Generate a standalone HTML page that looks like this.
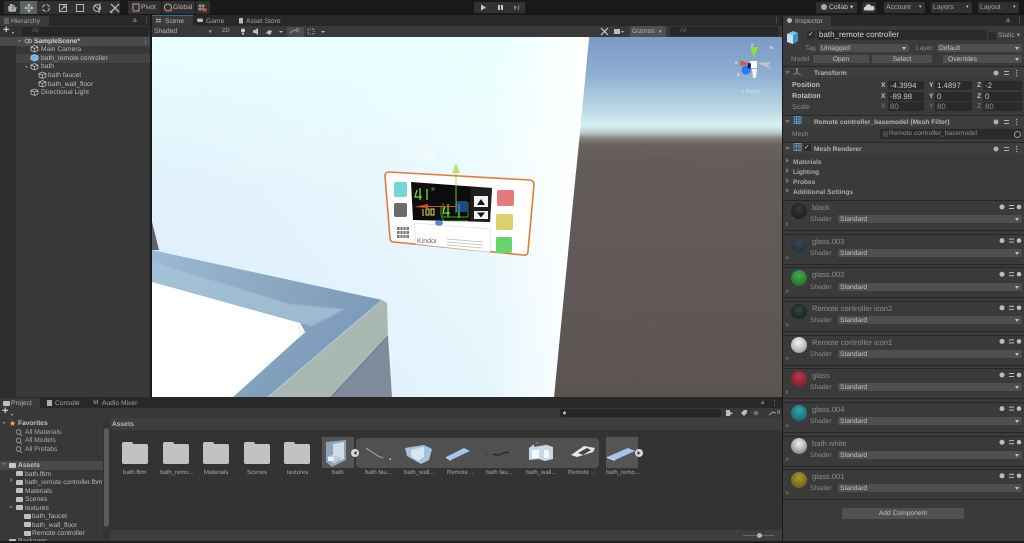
<!DOCTYPE html>
<html><head><meta charset="utf-8">
<style>
html,body{margin:0;padding:0;width:1024px;height:543px;overflow:hidden;background:#191919}
#w{position:absolute;left:0;top:0;width:1024px;height:543px;overflow:hidden;filter:blur(.35px)}
body{font-family:"Liberation Sans",sans-serif;font-size:6.700px;color:#c4c4c4;text-rendering:geometricPrecision}
.a,.t{position:absolute}
.t{white-space:nowrap;line-height:9px}
.b{font-weight:bold}
.d{color:#8a8a8a}
.m{font-size:7.600px;color:#8c8c8c}
.f{position:absolute;background:#2a2a2a;height:9px;border-radius:1px;color:#c4c4c4;line-height:9px;padding-left:2px;box-sizing:border-box;font-size:7.800px}
.dd{position:absolute;background:#4f4f4f;height:8px;border-radius:1px;line-height:9px;padding-left:2px;box-sizing:border-box;color:#c4c4c4}
.dd:after{content:"";position:absolute;right:3px;top:3px;border:2px solid transparent;border-top:3px solid #c4c4c4;border-bottom:0}
.tb{position:absolute;top:1px;height:13px;background:#303030;border-radius:1px}
.ball{position:absolute;left:791px;width:16px;height:16px;border-radius:50%}
.card{position:absolute;left:783px;width:241px;height:31px;background:#3a3a3a;border-top:1px solid #262626;border-bottom:1px solid #262626;box-sizing:border-box}
.lab{position:absolute;top:470px;font-size:6px;color:#a8a8a8;white-space:nowrap;text-align:center}
.fold{position:absolute;top:444px;width:26px;height:20px;background:#c2c2c2;border-radius:2px}
.fold:before{content:"";position:absolute;left:0;top:-2px;width:11px;height:5px;background:#c2c2c2;border-radius:2px 2px 0 0}
.sf{position:absolute;width:7px;height:5px;background:#c0c0c0;border-radius:1px}
</style></head><body><div id="w">

<!-- top toolbar -->
<div class="a" style="left:0;top:0;width:1024px;height:15px;background:#191919"></div>
<div class="tb" style="left:4px;width:116px"></div>
<div class="a" style="left:20px;top:1px;width:17px;height:13px;background:#5a5f62"></div>
<svg class="a" style="left:0;top:0" width="210" height="15" fill="none" stroke="#b8b8b8" stroke-width="1">
<path d="M9 11V6M10.500 11V4M12 11V4M14 11V5M9 11h6l1-4" stroke-width="1.400"/>
<path d="M29 5V11M26 8h6M29 4l-1 1.500h2zM29 12l-1-1.500h2zM25 8l1.500-1v2zM33 8l-1.500-1v2z"/>
<circle cx="46" cy="8" r="3.400" stroke-dasharray="4 1.500"/>
<rect x="59.500" y="4.500" width="7" height="7"/><path d="M61 10l4-4M63 6h2v2"/>
<rect x="76.500" y="4.500" width="7" height="7"/>
<circle cx="97" cy="8" r="3.500"/><path d="M100 3l-1 10M94 5l6 5"/>
<path d="M111 4l8 8M119 4l-8 8M110 11l2 2" stroke-width="1.300"/>
</svg>
<div class="tb" style="left:128px;width:33px"></div>
<div class="tb" style="left:162px;width:33px"></div>
<div class="tb" style="left:196px;width:14px"></div>
<svg class="a" style="left:0;top:0" width="210" height="15" fill="none" stroke="#aaa" stroke-width="1">
<rect x="133" y="4" width="6" height="7"/><circle cx="134" cy="11" r="1.500" fill="#c24a2e" stroke="none"/>
<circle cx="168" cy="7.500" r="3.500"/><circle cx="171" cy="10" r="1.500" fill="#c24a2e" stroke="none"/>
<path d="M200 4v7M203 4v7M198 6h7M198 9h7"/><circle cx="205" cy="10" r="2" fill="#c24a2e" stroke="none"/>
</svg>
<div class="t" style="left:141px;top:3px;color:#b8b8b8">Pivot</div>
<div class="t" style="left:173px;top:3px;color:#b8b8b8">Global</div>

<div class="tb" style="left:474px;top:2px;width:51px;height:11px;background:#323232"></div>
<svg class="a" style="left:474px;top:2px" width="51" height="11"><path d="M7 2.500l5 3-5 3z" fill="#c8c8c8"/><rect x="24" y="3" width="2" height="5" fill="#c8c8c8"/><rect x="27" y="3" width="2" height="5" fill="#c8c8c8"/><path d="M40 3l3.500 2.500L40 8z" fill="#777"/><rect x="44" y="3" width="1.200" height="5" fill="#777"/></svg>

<div class="tb" style="left:816px;top:2px;width:41px;height:11px"></div>
<div class="tb" style="left:862px;top:2px;width:14px;height:11px"></div>
<div class="tb" style="left:884px;top:2px;width:41px;height:11px"></div>
<div class="tb" style="left:931px;top:2px;width:41px;height:11px"></div>
<div class="tb" style="left:978px;top:2px;width:41px;height:11px"></div>
<div class="t" style="left:829px;top:3px">Collab ▾</div>
<div class="a" style="left:821px;top:4px;width:6px;height:6px;background:#aaa;border-radius:50%"></div>
<svg class="a" style="left:862px;top:2px" width="14" height="11"><path d="M3 8.500a2 2 0 0 1 .5-3.800 3 3 0 0 1 5.700-.7 2.300 2.300 0 0 1 1.800 4.500z" fill="#d0d0d0"/></svg>
<div class="t" style="left:886px;top:3px;color:#a8a8a8;font-size:6.900px">Account</div><div class="t" style="left:919px;top:3px;font-size:5px">▾</div>
<div class="t" style="left:933px;top:3px;color:#a8a8a8;font-size:6.900px">Layers</div><div class="t" style="left:966px;top:3px;font-size:5px">▾</div>
<div class="t" style="left:980px;top:3px;color:#a8a8a8;font-size:6.900px">Layout</div><div class="t" style="left:1013px;top:3px;font-size:5px">▾</div>

<!-- hierarchy -->
<div class="a" style="left:0;top:15px;width:150px;height:383px;background:#383838"></div>
<div class="a" style="left:0;top:15px;width:150px;height:11px;background:#282828"></div>
<div class="a" style="left:0;top:16px;width:49px;height:10px;background:#3a3a3a"></div>
<div class="t d" style="left:11px;top:17px;color:#a4a4a4;font-size:6.800px">Hierarchy</div>
<svg class="a" style="left:3px;top:17px" width="7" height="8" stroke="#888"><path d="M1 2h5M1 4h5M1 6h5"/></svg>
<div class="t" style="left:133px;top:16px;color:#aaa">a</div><div class="t" style="left:143px;top:16px;color:#aaa">⋮</div>
<div class="a" style="left:0;top:26px;width:150px;height:11px;background:#333"></div>
<div class="a" style="left:22px;top:27px;width:127px;height:9px;background:#262626;border-radius:2px"></div>
<div class="t" style="left:3px;top:26px;font-size:11px;font-weight:bold;color:#ccc">+</div><div class="t" style="left:12px;top:28px;font-size:4px">▾</div>
<div class="t" style="left:32px;top:27px;color:#666;font-size:6px">All</div>
<div class="a" style="left:0;top:37px;width:16px;height:361px;background:#2d2d2d"></div>
<div class="a" style="left:0;top:37px;width:150px;height:9px;background:#4a4a4a"></div>
<div class="a" style="left:16px;top:54px;width:134px;height:9px;background:#444"></div>
<div class="t b" style="left:34px;top:36.500px;color:#d0d0d0">SampleScene*</div>
<div class="t" style="left:41px;top:45px;color:#b8b8b8">Main Camera</div>
<div class="t" style="left:41px;top:53.500px;color:#b8b8b8">bath_remote controller</div>
<div class="t" style="left:41px;top:62px;color:#b8b8b8">bath</div>
<div class="t" style="left:48px;top:71px;color:#b8b8b8">bath faucet</div>
<div class="t" style="left:48px;top:79.500px;color:#b8b8b8">bath_wall_floor</div>
<div class="t" style="left:41px;top:88px;color:#b8b8b8">Directional Light</div>
<div class="t" style="left:142px;top:37px;color:#bbb">⋮</div>
<svg class="a" style="left:0;top:37px" width="60" height="60" fill="none" stroke="#bdbdbd" stroke-width=".8">
<path d="M18 3h3l-1.500 2z" fill="#888" stroke="none"/><path d="M25 29h3l-1.500 2z" fill="#888" stroke="none"/>
<circle cx="27" cy="4" r="2"/><circle cx="30" cy="4" r="1.500"/>
<path d="M31 10l3.500-1.500L38 10v3.500L34.500 15 31 13.500zM31 10l3.500 1.500L38 10M34.500 11.500V15"/>
<path d="M31 28l3.500-1.500L38 28v3.500L34.500 33 31 31.500zM31 28l3.500 1.500L38 28M34.500 29.500V33"/>
<path d="M39 36.500l3.500-1.500L46 36.500V40l-3.500 1.500L39 40zM39 36.500l3.500 1.500 3.500-1.500M42.500 38v3.500"/>
<path d="M39 45l3.500-1.500L46 45v3.500L42.500 50 39 48.500zM39 45l3.500 1.500L46 45M42.500 46.500V50"/>
<path d="M31 53.500l3.500-1.500L38 53.500V57l-3.500 1.500L31 57zM31 53.500l3.500 1.500 3.500-1.500M34.500 55v3.500"/>
<path d="M31 19l3.500-1.500L38 19v3.500L34.500 24 31 22.500z" fill="#6db4e0" stroke="#9fd4ee"/>
</svg>

<!-- scene tabs -->
<div class="a" style="left:152px;top:15px;width:630px;height:11px;background:#282828"></div>
<div class="a" style="left:152px;top:15px;width:41px;height:11px;background:#3a3a3a;border-top:1px solid #3a6a96;box-sizing:border-box"></div>
<div class="t" style="left:165px;top:17px;color:#b8b8b8">Scene</div>
<div class="t" style="left:206px;top:17px;color:#a4a4a4">Game</div>
<div class="t" style="left:246px;top:17px;color:#a4a4a4">Asset Store</div>
<svg class="a" style="left:152px;top:15px" width="100" height="11" fill="none" stroke="#aaa"><path d="M5 3v5M8 3v5M4 4.500h5M4 6.500h5" stroke-width=".7"/><rect x="45" y="3.500" width="6" height="3.500" rx="1.500" fill="#bbb" stroke="none"/><rect x="87" y="3" width="4" height="5.500" fill="#bbb" stroke="none"/></svg>
<div class="t" style="left:773px;top:16px;color:#aaa">⋮</div>
<div class="a" style="left:152px;top:26px;width:630px;height:11px;background:#383838"></div>
<div class="t" style="left:154px;top:27px;color:#b8b8b8">Shaded</div>
<div class="t" style="left:209px;top:28px;font-size:5px">▾</div>
<div class="t" style="left:222px;top:27px;font-size:6px;color:#aaa">2D</div>
<svg class="a" style="left:236px;top:26px" width="100" height="11"><circle cx="7" cy="4.500" r="2" fill="#ccc"/><rect x="6" y="7" width="2" height="1.500" fill="#ccc"/><path d="M17 4h2l3-2v7l-3-2h-2z" fill="#bbb"/><path d="M30 7l3-3 3 1-2 4z" fill="#bbb"/><path d="M43 5h4l-2 2z" fill="#bbb"/><rect x="51" y="1" width="17" height="10" fill="#4c4c4c"/><path d="M54 7l4-3 3 1" stroke="#999" fill="none"/><rect x="72" y="3" width="6" height="5" fill="none" stroke="#aaa" stroke-dasharray="1 1"/><path d="M85 5h4l-2 2z" fill="#bbb"/></svg>
<div class="t" style="left:296px;top:27px;font-size:6px;color:#aaa">0</div>
<svg class="a" style="left:599px;top:26px" width="30" height="11"><path d="M2 2l7 7M9 2l-7 7" stroke="#ccc" stroke-width="1.200"/><rect x="15" y="3" width="6" height="5" fill="#bbb"/><path d="M22 5h3l-1.500 2z" fill="#bbb"/></svg>
<div class="a" style="left:630px;top:26px;width:36px;height:11px;background:#505050"></div>
<div class="t" style="left:632px;top:27px;color:#b0b0b0">Gizmos</div>
<div class="t" style="left:659px;top:28px;font-size:5px">▾</div>
<div class="a" style="left:670px;top:27px;width:109px;height:9px;background:#272727;border-radius:2px"></div>
<div class="t" style="left:680px;top:27px;font-size:6px;color:#666">All</div>

<!-- scene -->
<svg class="a" style="left:152px;top:37px" width="630" height="360" viewBox="152 37 630 360">
<defs>
<linearGradient id="sky" x1="0" y1="37" x2="0" y2="160" gradientUnits="userSpaceOnUse">
<stop offset="0" stop-color="#7b9ac6"/><stop offset=".3" stop-color="#8eaed2"/><stop offset=".6" stop-color="#bcdae6"/><stop offset=".72" stop-color="#d8f0f2"/><stop offset=".78" stop-color="#b8c8c8"/><stop offset=".82" stop-color="#8a8684"/><stop offset=".87" stop-color="#6a6361"/><stop offset="1" stop-color="#625c5a"/>
</linearGradient>
<linearGradient id="gr" x1="0" y1="150" x2="0" y2="397" gradientUnits="userSpaceOnUse"><stop offset="0" stop-color="#645d5b"/><stop offset="1" stop-color="#5b5452"/></linearGradient>
<linearGradient id="wall" x1="585" y1="60" x2="170" y2="390" gradientUnits="userSpaceOnUse"><stop offset="0" stop-color="#ffffff"/><stop offset=".1" stop-color="#f6ffff"/><stop offset=".4" stop-color="#e8f7fd"/><stop offset="1" stop-color="#dcedfb"/></linearGradient>
<linearGradient id="wall2" x1="200" y1="37" x2="200" y2="190" gradientUnits="userSpaceOnUse"><stop offset="0" stop-color="#e8ffff"/><stop offset="1" stop-color="#e8ffff" stop-opacity="0"/></linearGradient>
<linearGradient id="wall3" x1="490" y1="0" x2="585" y2="0" gradientUnits="userSpaceOnUse"><stop offset="0" stop-color="#fff" stop-opacity="0"/><stop offset="1" stop-color="#fff"/></linearGradient>
<linearGradient id="rim" x1="152" y1="250" x2="320" y2="390" gradientUnits="userSpaceOnUse"><stop offset="0" stop-color="#9cbad4"/><stop offset=".5" stop-color="#8ca8c2"/><stop offset="1" stop-color="#7a9aba"/></linearGradient>
<filter id="bl"><feGaussianBlur stdDeviation=".8"/></filter>
</defs>
<rect x="152" y="37" width="630" height="120" fill="url(#sky)"/>
<rect x="152" y="157" width="630" height="240" fill="url(#gr)"/>
<g stroke="#6e6765" stroke-width=".4" opacity=".6"><path d="M570 190L782 205M570 240L782 275M565 300L782 365M640 150L782 175"/></g>
<path d="M152 37H589L554 397H152z" fill="url(#wall)"/>
<path d="M152 37H589L575 190H152z" fill="url(#wall2)"/>
<path d="M480 37H589L554 397H480z" fill="url(#wall3)"/>
<path d="M152 222l7 28h-7z" fill="#5d636c"/>
<path d="M152 250L382 300L268 397H233L305 332L300 323L152 282z" fill="url(#rim)"/>
<path d="M152 262L290 304L345 309L312 326L300 323L152 282z" fill="#a8c6da" opacity=".7" filter="url(#bl)"/>
<path d="M152 282L300 323L305 332L233 397H152z" fill="#ffffff"/>
<path d="M298 324l7 8-7 6z" fill="#eef8e8" filter="url(#bl)"/>
<path d="M382 300L387 303L388 336L331 397H268z" fill="#a9b8b2"/>
<path d="M382 300L268 397" stroke="#b8ccd0" stroke-width="1"/>
<path d="M388 336L392 397H331z" fill="#7f8a9b"/>
<path d="M388 336L331 397" stroke="#666e78" stroke-width=".7"/>
<!-- cloud gizmo -->
<path d="M419 162c-5 0-6-5-2-6 0-5 3-9 8-9 3 0 5 2 6 5 3-1 8 1 8 5 0 3-2 5-5 5z" fill="#f0f9fc" stroke="#e6f0f4" stroke-width=".7"/>
<!-- device -->
<path d="M389 172L529 180Q534 180 534 185L528 251Q528 256 523 255L394 242Q390 242 390 238L385 176Q385 172 389 172z" fill="#ffffff" stroke="#e67a33" stroke-width="1.600"/>
<path d="M411 182L492 188L490 222L413 220z" fill="#0c0c0c"/>
<path d="M471 187L492 188L490 222L470 221z" fill="#1e1e1e"/>
<path d="M474 196h14v11h-14zM474 211h14v8h-14z" fill="#f2f2f2"/>
<path d="M477 205l4-6 4 6zM477 212.500l4 5 4-5z" fill="#111"/>
<rect x="394" y="182" width="13" height="15" rx="2" fill="#74d6d6"/>
<rect x="394" y="203" width="13" height="14" rx="2" fill="#6c6c6c"/>
<rect x="497" y="190" width="17" height="16" rx="2" fill="#e47a7c"/>
<rect x="496" y="214" width="17" height="16" rx="2" fill="#dccf70"/>
<rect x="496" y="237" width="16" height="16" rx="2" fill="#68d66c"/>
<path d="M414 223L491 229L490 252L416 244z" fill="#fff" stroke="#d4d4d4" stroke-width=".5"/>
<g fill="#777"><rect x="397" y="227" width="12" height="3"/><rect x="397" y="231" width="12" height="3"/><rect x="397" y="235" width="12" height="3"/></g>
<g stroke="#fff" stroke-width=".8"><path d="M400 226v13M403 226v13M406 226v13"/></g>
<text x="417" y="243" font-family="Liberation Sans,sans-serif" font-size="7" fill="#666">Kindoi</text>
<path d="M447 239l36 3M447 242l36 3M447 245l36 3" stroke="#bbb" stroke-width=".8"/>
<!-- display -->
<g fill="none" stroke="#72e03c" stroke-width="1.300"><path d="M417 190l-2 7h7M420 188v12"/><path d="M427 189v11"/><path d="M445 206l-2 7h7M448 204v13"/><path d="M459 204v14"/></g>
<path d="M432 188h2v2h-2z" fill="none" stroke="#72e03c" stroke-width=".6"/>
<g fill="none" stroke="#d8e060" stroke-width="1"><path d="M423 209v7M426 209h3v6h-3zM431 209h3v6h-3z"/></g>
<path d="M443 203v14h25V202M441 207v9l3 5H468" fill="none" stroke="#56c83c" stroke-width=".7"/>
<rect x="456" y="201" width="11" height="11" fill="#2b68c8" opacity=".65"/>
<path d="M456 163l-4 10h8z" fill="#bce06a"/>
<path d="M456 173v40" stroke="#7adf3a" stroke-width=".8"/>
<path d="M428 208l-14-1 14-3v2h28v1h-28z" fill="#e04a28"/>
<ellipse cx="439" cy="223" rx="4" ry="2.800" fill="#5a88d8"/>
<!-- scene gizmo -->
<path d="M754 58l-4-11h8z" fill="#8fe03c"/>
<path d="M749 64l-9-4 .5 6z" fill="#e8503a"/>
<path d="M757 63l14-1-3 3 3 4z" fill="#c4c4c4"/>
<path d="M752 69l1 9h3l1-9z" fill="#f0f0f0"/>
<rect x="750" y="61" width="7" height="7" fill="#fff"/>
<circle cx="746" cy="70" r="4.600" fill="#2f78ea"/>
<path d="M748 63l3 .5-.5 6-3-2z" fill="#0a1a6a"/>
<text x="751" y="46" font-size="5" fill="#fff" font-family="Liberation Sans,sans-serif">y</text>
<text x="735" y="64" font-size="5" fill="#fff" font-family="Liberation Sans,sans-serif">x</text>
<text x="737" y="76" font-size="5" fill="#fff" font-family="Liberation Sans,sans-serif">z</text>
<text x="741" y="93" font-size="5.500" fill="#d4e4f0" font-family="Liberation Sans,sans-serif">&lt; Persp</text>
<rect x="770" y="46" width="3" height="3" fill="#bcc8d8"/>
</svg>

<!-- project -->
<div class="a" style="left:0;top:397px;width:782px;height:146px;background:#333"></div>
<div class="a" style="left:0;top:397px;width:782px;height:11px;background:#282828"></div>
<div class="a" style="left:0;top:398px;width:40px;height:10px;background:#3a3a3a"></div>
<div class="t" style="left:11px;top:399px;color:#b0b0b0">Project</div>
<div class="t" style="left:55px;top:399px;color:#a0a0a0">Console</div>
<div class="t" style="left:102px;top:399px;color:#a0a0a0">Audio Mixer</div>
<div class="sf" style="left:3px;top:401px"></div>
<div class="a" style="left:47px;top:400px;width:5px;height:6px;background:#aaa"></div>
<div class="t" style="left:93px;top:399px;color:#aaa;font-weight:bold;font-size:6px">!ı!</div>
<div class="t" style="left:761px;top:399px;color:#aaa;font-size:6px">a</div><div class="t" style="left:771px;top:399px;color:#aaa">⋮</div>
<div class="a" style="left:0;top:408px;width:782px;height:10px;background:#383838"></div>
<div class="t" style="left:2px;top:407px;font-size:11px;font-weight:bold;color:#ccc">+</div><div class="t" style="left:11px;top:410px;font-size:4px">▾</div>
<div class="a" style="left:560px;top:409px;width:161px;height:8px;background:#252525;border-radius:2px"></div>
<svg class="a" style="left:560px;top:408px" width="222" height="10" fill="#bbb"><circle cx="4.500" cy="5" r="1.500"/><rect x="166" y="2" width="4" height="6"/><path d="M170 4l3 1-3 2z"/><path d="M181 5l3-3h3v3l-3 3z"/><path d="M196 2l1 2h2l-1.500 1.500.5 2-2-1-2 1 .5-2L193 4h2z" fill="#777"/><path d="M209 7l4-3 3 1" stroke="#aaa" fill="none"/></svg>
<div class="t" style="left:777px;top:409px;font-size:6px;color:#aaa">9</div>

<div class="a" style="left:0;top:418px;width:104px;height:125px;background:#383838"></div>
<div class="a" style="left:0;top:461px;width:103px;height:9px;background:#4a4a4a"></div>

<div class="t" style="left:9px;top:419px;color:#f2b632;font-size:8px">★</div>
<div class="t b" style="left:18px;top:419px;color:#c4c4c4">Favorites</div>
<div class="t" style="left:25px;top:428px;color:#a8a8a8">All Materials</div>
<div class="t" style="left:25px;top:436px;color:#a8a8a8">All Models</div>
<div class="t" style="left:25px;top:445px;color:#a8a8a8">All Prefabs</div>
<svg class="a" style="left:0;top:418px" width="50" height="125" fill="none" stroke="#aaa" stroke-width=".8"><circle cx="18.500" cy="14" r="2.300"/><path d="M20 16l2 2"/><circle cx="18.500" cy="22.500" r="2.300"/><path d="M20 24.500l2 2"/><circle cx="18.500" cy="31" r="2.300"/><path d="M20 33l2 2"/><path d="M2 4h4l-2 2.500zM2 45h4l-2 2.500zM9 88h4l-2 2.500z" fill="#777" stroke="none"/><path d="M10 60l3 2-3 2z" fill="#777" stroke="none"/></svg>
<div class="sf" style="left:9px;top:463px;background:#c8c8c8"></div>
<div class="t b" style="left:18px;top:461px;color:#c4c4c4">Assets</div>
<div class="sf" style="left:16px;top:471px"></div><div class="t" style="left:25px;top:470px;color:#b8b8b8">bath.fbm</div>
<div class="sf" style="left:16px;top:480px"></div><div class="t" style="left:25px;top:478px;color:#b8b8b8;font-size:6.500px">bath_remote controller.fbm</div>
<div class="sf" style="left:16px;top:488px"></div><div class="t" style="left:25px;top:487px;color:#b8b8b8">Materials</div>
<div class="sf" style="left:16px;top:497px"></div><div class="t" style="left:25px;top:495px;color:#b8b8b8">Scenes</div>
<div class="sf" style="left:16px;top:505px"></div><div class="t" style="left:25px;top:504px;color:#b8b8b8">textures</div>
<div class="sf" style="left:24px;top:514px"></div><div class="t" style="left:32px;top:512px;color:#b8b8b8">bath_faucet</div>
<div class="sf" style="left:24px;top:522px"></div><div class="t" style="left:32px;top:521px;color:#b8b8b8">bath_wall_floor</div>
<div class="sf" style="left:24px;top:531px"></div><div class="t" style="left:32px;top:529px;color:#b8b8b8">Remote controller</div>
<div class="sf" style="left:9px;top:539px"></div><div class="t" style="left:18px;top:537px;color:#b8b8b8">Packages</div>
<div class="a" style="left:103px;top:418px;width:7px;height:125px;background:#333"></div>
<div class="a" style="left:104px;top:428px;width:5px;height:99px;background:#5c5c5c;border-radius:3px"></div>
<div class="a" style="left:110px;top:418px;width:672px;height:12px;background:#3e3e3e"></div>
<div class="t b" style="left:112px;top:420px;color:#b8b8b8">Assets</div>
<div class="a" style="left:110px;top:530px;width:672px;height:13px;background:#3e3e3e"></div>
<div class="a" style="left:743px;top:535px;width:31px;height:1px;background:#666"></div>
<div class="a" style="left:757px;top:533px;width:5px;height:5px;border-radius:50%;background:#b4b4b4"></div>
<div class="a" style="left:0;top:541px;width:782px;height:2px;background:#1c1c1c"></div>

<!-- assets grid -->
<div class="fold" style="left:122px"></div><div class="lab" style="left:123px">bath.fbm</div>
<div class="fold" style="left:163px"></div><div class="lab" style="left:160px">bath_remo...</div>
<div class="fold" style="left:203px"></div><div class="lab" style="left:204px">Materials</div>
<div class="fold" style="left:244px"></div><div class="lab" style="left:247px">Scenes</div>
<div class="fold" style="left:284px"></div><div class="lab" style="left:287px">textures</div>

<div class="a" style="left:322px;top:437px;width:32px;height:31px;background:#555"></div>
<div class="a" style="left:356px;top:438px;width:243px;height:30px;background:#505050;border-radius:4px"></div>
<div class="a" style="left:606px;top:437px;width:32px;height:31px;background:#555"></div>
<svg class="a" style="left:320px;top:430px" width="330" height="45">
<path d="M6 12l20-2v20l-14 7-6-5z" fill="#8ea4bc"/><path d="M13 14l11-2v17l-11 3z" fill="#d0dde9"/><path d="M7 27l5-2 10 3-8 6z" fill="#bcccdc"/><rect x="8" y="27" width="6" height="4" fill="#eef4fa"/>
<circle cx="35" cy="23" r="4" fill="#d8d8d8"/><path d="M36.500 21l-3 2 3 2z" fill="#333"/>
<path d="M46 18l12 8M58 26l5 2" stroke="#b8b8b8" stroke-width=".8" fill="none"/><rect x="69.500" y="28.500" width="1.500" height="1.500" fill="#ccc"/>
<path d="M85 18l19-3 8 4-3 11-8 4-14-8z" fill="#a8c2dc"/><path d="M91 20l13-3v10l-6 4-7-5z" fill="#d4e6f6"/>
<path d="M126 27l18-9 6 3-19 9z" fill="#a6c6ee"/><path d="M126 27l5 3v1l-5-3z" fill="#dde9f5"/>
<path d="M166 24h1M173 24c4 2 8 1 10-1l6-1" stroke="#222" stroke-width="1.200" fill="none"/>
<path d="M209 18l8-6 10 3 6 2v12l-8 2-6-2-10 1z" fill="#c8d8e8"/><path d="M212 20h7v8h-7zM224 20h5v8h-5z" fill="#f4f8fc"/><path d="M214 13l8-1 4 3-12 2z" fill="#555"/>
<path d="M251 25l13-9 11 2-2 4-16 5z" fill="#e8e8e8"/><path d="M258 23l9-5 4 2-8 5z" fill="#444"/>
<path d="M287 27l21-9 7 3-20 9z" fill="#a6c6ee"/><path d="M287 27l8 3v1l-8-3z" fill="#dde9f5"/>
<circle cx="319" cy="23" r="4" fill="#d8d8d8"/><path d="M317.500 21l3 2-3 2z" fill="#333"/>
</svg>
<div class="lab" style="left:332px">bath</div>
<div class="lab" style="left:365px">bath fau...</div>
<div class="lab" style="left:404px">bath_wall...</div>
<div class="lab" style="left:447px">Remote ...</div>
<div class="lab" style="left:486px">bath fau...</div>
<div class="lab" style="left:526px">bath_wall...</div>
<div class="lab" style="left:568px">Remote ...</div>
<div class="lab" style="left:606px">bath_remo...</div>

<!-- inspector -->
<div class="a" style="left:783px;top:15px;width:241px;height:528px;background:#3a3a3a"></div>
<div class="a" style="left:783px;top:15px;width:241px;height:11px;background:#282828"></div>
<div class="a" style="left:783px;top:16px;width:48px;height:10px;background:#3a3a3a"></div>
<div class="a" style="left:787px;top:18px;width:5px;height:5px;border-radius:50%;background:#bbb"></div>
<div class="t" style="left:795px;top:17px;color:#aaa;font-size:6.800px">Inspector</div>
<div class="t" style="left:1006px;top:16px;color:#aaa">a</div><div class="t" style="left:1016px;top:16px;color:#aaa">⋮</div>
<svg class="a" style="left:786px;top:30px" width="14" height="16"><path d="M1 4l6-3 5 2v8l-5 3-6-2z" fill="#7cc4ec"/><path d="M7 5l5-2v8l-5 3z" fill="#3d92c8"/><path d="M1 4l6 1v9l-6-2z" fill="#bfe4f8"/></svg>
<div class="a" style="left:807px;top:31px;width:8px;height:8px;background:#2a2a2a;border-radius:1px"></div>
<div class="t" style="left:808px;top:30px;color:#ddd;font-size:7px">✓</div>
<div class="f" style="left:817px;top:30px;width:170px;height:10px;line-height:10px;color:#d4d4d4;font-size:8px">bath_remote controller</div>
<div class="a" style="left:988px;top:32px;width:8px;height:8px;background:#2c2c2c"></div>
<div class="t" style="left:998px;top:31px;color:#a0a0a0">Static ▾</div>
<div class="t d" style="left:805px;top:44px">Tag</div>
<div class="dd" style="left:819px;top:44px;width:90px">Untagged</div>
<div class="t d" style="left:916px;top:44px">Layer</div>
<div class="dd" style="left:937px;top:44px;width:85px">Default</div>
<div class="t d" style="left:791px;top:55px">Model</div>
<div class="a" style="left:813px;top:55px;width:56px;height:8px;background:#4e4e4e;line-height:9px;text-align:center">Open</div>
<div class="a" style="left:872px;top:55px;width:60px;height:8px;background:#4e4e4e;line-height:9px;text-align:center">Select</div>
<div class="dd" style="left:943px;top:55px;width:79px;padding-left:5px">Overrides</div>

<!-- components -->
<div class="a" style="left:783px;top:66px;width:241px;height:12px;background:#3e3e3e;border-top:1px solid #262626;box-sizing:border-box"></div>
<div class="t b" style="left:814px;top:68.500px;color:#b4b4b4">Transform</div>
<div class="t b" style="left:792px;top:81px;color:#c0c0c0;font-size:7.100px">Position</div>
<div class="t b" style="left:792px;top:92px;color:#c0c0c0;font-size:7.100px">Rotation</div>
<div class="t" style="left:792px;top:103px;color:#888;font-size:7.100px">Scale</div>
<div class="t b" style="left:881px;top:81px">X</div><div class="f" style="left:888px;top:81px;width:36px">-4.3994</div>
<div class="t b" style="left:929px;top:81px">Y</div><div class="f" style="left:935px;top:81px;width:37px">1.4897</div>
<div class="t b" style="left:977px;top:81px">Z</div><div class="f" style="left:983px;top:81px;width:39px">-2</div>
<div class="t b" style="left:881px;top:92px">X</div><div class="f" style="left:888px;top:92px;width:36px">-89.98</div>
<div class="t b" style="left:929px;top:92px">Y</div><div class="f" style="left:935px;top:92px;width:37px">0</div>
<div class="t b" style="left:977px;top:92px">Z</div><div class="f" style="left:983px;top:92px;width:39px">0</div>
<div class="t" style="left:881px;top:102px;color:#888">X</div><div class="f" style="left:888px;top:102px;width:36px;color:#888">80</div>
<div class="t" style="left:929px;top:102px;color:#888">Y</div><div class="f" style="left:935px;top:102px;width:37px;color:#888">80</div>
<div class="t" style="left:977px;top:102px;color:#888">Z</div><div class="f" style="left:983px;top:102px;width:39px;color:#888">80</div>

<div class="a" style="left:783px;top:115px;width:241px;height:12px;background:#3e3e3e;border-top:1px solid #262626;box-sizing:border-box"></div>
<div class="t b" style="left:814px;top:117.500px;color:#b4b4b4;font-size:6.600px">Remote controller_basemodel (Mesh Filter)</div>
<div class="t d" style="left:792px;top:130px">Mesh</div>
<div class="f" style="left:880px;top:129px;width:142px;height:10px;line-height:10px;padding-left:9px;color:#909090;font-size:6.600px">Remote controller_basemodel</div>
<div class="a" style="left:883px;top:131px;width:5px;height:6px;background:#3a4c55"></div>
<div class="a" style="left:1014px;top:131px;width:5px;height:5px;border:1px solid #999;border-radius:50%"></div>

<div class="a" style="left:783px;top:142px;width:241px;height:12px;background:#3e3e3e;border-top:1px solid #262626;box-sizing:border-box"></div>
<div class="a" style="left:804px;top:144px;width:7px;height:7px;background:#2a2a2a"></div>
<div class="t" style="left:804px;top:143px;color:#ddd">✓</div>
<div class="t b" style="left:814px;top:144.500px;color:#b4b4b4;font-size:6.600px">Mesh Renderer</div>
<div class="t b" style="left:793px;top:157.500px;color:#a8a8a8;font-size:6.600px">Materials</div>
<div class="t b" style="left:793px;top:167.500px;color:#a8a8a8;font-size:6.600px">Lighting</div>
<div class="t b" style="left:793px;top:177.500px;color:#a8a8a8;font-size:6.600px">Probes</div>
<div class="t b" style="left:793px;top:187.500px;color:#a8a8a8;font-size:6.600px">Additional Settings</div>

<svg class="a" style="left:783px;top:66px" width="241" height="130" fill="#777">
<path d="M2 5h5l-2.500 3zM2 54h5l-2.500 3zM2 81h5l-2.500 3z"/><path d="M3 92l3 2.500-3 2.500zM3 102l3 2.500-3 2.500zM3 112l3 2.500-3 2.500zM3 122l3 2.500-3 2.500z"/>
<path d="M14 2v5" stroke="#7adf3a" fill="none"/><path d="M14 7l-4 2" stroke="#e05030" fill="none"/><path d="M14 7l4 2" stroke="#3a80e8" fill="none"/>
<g fill="none" stroke="#5ea8d8" stroke-width=".8"><rect x="11" y="50.500" width="7" height="7"/><path d="M13.500 50v8M16 50v8M11 53h7M11 55.500h7"/><rect x="11" y="77.500" width="7" height="7"/><path d="M13.500 77v8M16 77v8M11 80h7"/></g>
<g fill="#b0b0b0"><circle cx="213" cy="7" r="2.500"/><circle cx="213" cy="56" r="2.500"/><circle cx="213" cy="83" r="2.500"/>
<rect x="221" y="5" width="5" height="1"/><rect x="221" y="8" width="5" height="1"/><rect x="221" y="54" width="5" height="1"/><rect x="221" y="57" width="5" height="1"/><rect x="221" y="81" width="5" height="1"/><rect x="221" y="84" width="5" height="1"/>
<rect x="233" y="4" width="1.200" height="1.200"/><rect x="233" y="6.500" width="1.200" height="1.200"/><rect x="233" y="9" width="1.200" height="1.200"/>
<rect x="233" y="53" width="1.200" height="1.200"/><rect x="233" y="55.500" width="1.200" height="1.200"/><rect x="233" y="58" width="1.200" height="1.200"/>
<rect x="233" y="80" width="1.200" height="1.200"/><rect x="233" y="82.500" width="1.200" height="1.200"/><rect x="233" y="85" width="1.200" height="1.200"/></g>
</svg>

<!-- materials -->
<div class="card" style="top:200px"></div>
<div class="card" style="top:233.500px"></div>
<div class="card" style="top:267px"></div>
<div class="card" style="top:301px"></div>
<div class="card" style="top:334.500px"></div>
<div class="card" style="top:368px"></div>
<div class="card" style="top:402px"></div>
<div class="card" style="top:435.500px"></div>
<div class="card" style="top:469px"></div>

<div class="ball" style="top:203px;background:radial-gradient(circle at 50% 35%,#33363a,#17181a)"></div>
<div class="ball" style="top:236px;background:radial-gradient(circle at 50% 40%,#3a4658,#23282f)"></div>
<div class="ball" style="top:270px;background:radial-gradient(circle at 50% 35%,#3fb048,#1d5e24)"></div>
<div class="ball" style="top:304px;background:radial-gradient(circle at 50% 40%,#24503a,#20241f 65%,#8a8a80)"></div>
<div class="ball" style="top:337px;background:radial-gradient(circle at 45% 35%,#f4f4f4,#8a8a8a)"></div>
<div class="ball" style="top:371px;background:radial-gradient(circle at 50% 35%,#b83848,#6a1c24)"></div>
<div class="ball" style="top:405px;background:radial-gradient(circle at 50% 35%,#2ea6ac,#15585c)"></div>
<div class="ball" style="top:438px;background:radial-gradient(circle at 50% 35%,#eef2f6,#6c6e70)"></div>
<div class="ball" style="top:472px;background:radial-gradient(circle at 50% 35%,#a89a30,#5a5218)"></div>

<div class="t m" style="left:812px;top:203px">black</div>
<div class="t m" style="left:812px;top:237px">glass.003</div>
<div class="t m" style="left:812px;top:270px">glass.002</div>
<div class="t m" style="left:812px;top:304px">Remote controller icon2</div>
<div class="t m" style="left:812px;top:338px">Remote controller icon1</div>
<div class="t m" style="left:812px;top:371px">glass</div>
<div class="t m" style="left:812px;top:405px">glass.004</div>
<div class="t m" style="left:812px;top:439px">bath white</div>
<div class="t m" style="left:812px;top:472px">glass.001</div>

<div class="t d" style="left:810px;top:215px">Shader</div><div class="dd" style="left:838px;top:215px;width:184px">Standard</div>
<div class="t d" style="left:810px;top:249px">Shader</div><div class="dd" style="left:838px;top:249px;width:184px">Standard</div>
<div class="t d" style="left:810px;top:283px">Shader</div><div class="dd" style="left:838px;top:283px;width:184px">Standard</div>
<div class="t d" style="left:810px;top:316px">Shader</div><div class="dd" style="left:838px;top:316px;width:184px">Standard</div>
<div class="t d" style="left:810px;top:350px">Shader</div><div class="dd" style="left:838px;top:350px;width:184px">Standard</div>
<div class="t d" style="left:810px;top:383px">Shader</div><div class="dd" style="left:838px;top:383px;width:184px">Standard</div>
<div class="t d" style="left:810px;top:417px">Shader</div><div class="dd" style="left:838px;top:417px;width:184px">Standard</div>
<div class="t d" style="left:810px;top:451px">Shader</div><div class="dd" style="left:838px;top:451px;width:184px">Standard</div>
<div class="t d" style="left:810px;top:484px">Shader</div><div class="dd" style="left:838px;top:484px;width:184px">Standard</div>

<svg class="a" style="left:783px;top:200px" width="241" height="300" fill="#bcbcbc">
<g id="ic"><circle cx="219" cy="7" r="2.500"/><rect x="226" y="5" width="5" height="1"/><rect x="226" y="8" width="5" height="1"/><circle cx="236" cy="7" r="2.300"/><path d="M3 22l3 2-3 2z" fill="#666"/></g>
<use href="#ic" y="33.600"/><use href="#ic" y="67.200"/><use href="#ic" y="100.800"/><use href="#ic" y="134.400"/><use href="#ic" y="168"/><use href="#ic" y="201.600"/><use href="#ic" y="235.200"/><use href="#ic" y="268.800"/>
</svg>

<div class="a" style="left:842px;top:508px;width:122px;height:11px;background:#505050;border-radius:1px;line-height:11px;text-align:center;color:#c0c0c0">Add Component</div>
<div class="a" style="left:783px;top:541px;width:241px;height:2px;background:#1c1c1c"></div>
</div></body></html>
